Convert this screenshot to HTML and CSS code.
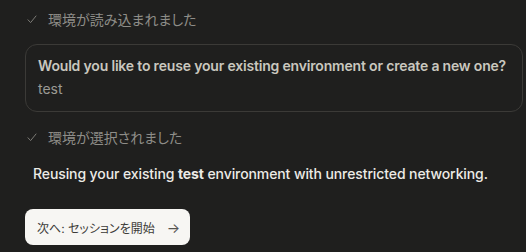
FILE: index.html
```html
<!DOCTYPE html>
<html lang="ja">
<head>
<meta charset="utf-8">
<link rel="stylesheet" href="styles.css">
</head>
<body>
<div class="page">
  <div class="status">
    <svg class="check" width="10" height="9" viewBox="0 0 10 9"><path d="M1 4.8 L3.6 7.6 L9 1" fill="none" stroke="currentColor" stroke-width="1" stroke-linecap="round" stroke-linejoin="round"/></svg>
    <span>環境が読み込まれました</span>
  </div>
  <div class="card">
    <div class="question">Would you like to reuse your existing environment or create a new one?</div>
    <div class="answer">test</div>
  </div>
  <div class="status status2">
    <svg class="check" width="10" height="9" viewBox="0 0 10 9"><path d="M1 4.8 L3.6 7.6 L9 1" fill="none" stroke="currentColor" stroke-width="1" stroke-linecap="round" stroke-linejoin="round"/></svg>
    <span>環境が選択されました</span>
  </div>
  <p class="message">Reusing your existing <strong>test</strong> environment with unrestricted networking.</p>
  <button class="next"><span class="label">次へ: セッションを開始</span><span class="arrow">→</span></button>
</div>
</body>
</html>
```

FILE: styles.css
```css
html, body {
  margin: 0;
  padding: 0;
  background: #1f1f1e;
}
body {
  width: 526px;
  height: 252px;
  overflow: hidden;
  font-family: Inter, "Noto Sans CJK JP", sans-serif;
}
.page {
  display: flex;
  flex-direction: column;
  align-items: flex-start;
  padding: 11px 3px 0 25px;
}
.status {
  display: flex;
  align-items: center;
  gap: 11px;
  padding-left: 2px;
  height: 16px;
  font-size: 14px;
  color: #8e8d88;
  white-space: nowrap;
  font-feature-settings: "palt";
}
.check {
  color: #7c7b76;
}
.card {
  margin-top: 17px;
  box-sizing: border-box;
  width: 498px;
  height: 68px;
  border: 1px solid #3b3a37;
  border-radius: 12px;
  padding: 11px 12px 0 12px;
}
.question {
  font-size: 14px;
  font-weight: 600;
  color: #c9c7be;
  line-height: 20px;
  white-space: nowrap;
  letter-spacing: -0.18px;
}
.answer {
  margin-top: 3px;
  font-size: 14px;
  color: #9b9a94;
  line-height: 20px;
}
.status2 {
  margin-top: 17px;
}
.message {
  margin: 19px 0 0 8px;
  font-size: 14px;
  font-weight: 500;
  color: #ecebe6;
  line-height: 20px;
  white-space: nowrap;
  letter-spacing: -0.1px;
}
.message strong {
  font-weight: 700;
}
.next {
  margin-top: 25px;
  height: 36px;
  border: none;
  border-radius: 8px;
  background: #f7f6f3;
  color: #3d3c39;
  font-family: inherit;
  font-size: 12px;
  display: flex;
  align-items: center;
  padding: 0 10px 0 12px;
  gap: 12px;
  white-space: nowrap;
  font-feature-settings: "palt";
}
.arrow {
  font-size: 14px;
  color: #55544f;
}
```
